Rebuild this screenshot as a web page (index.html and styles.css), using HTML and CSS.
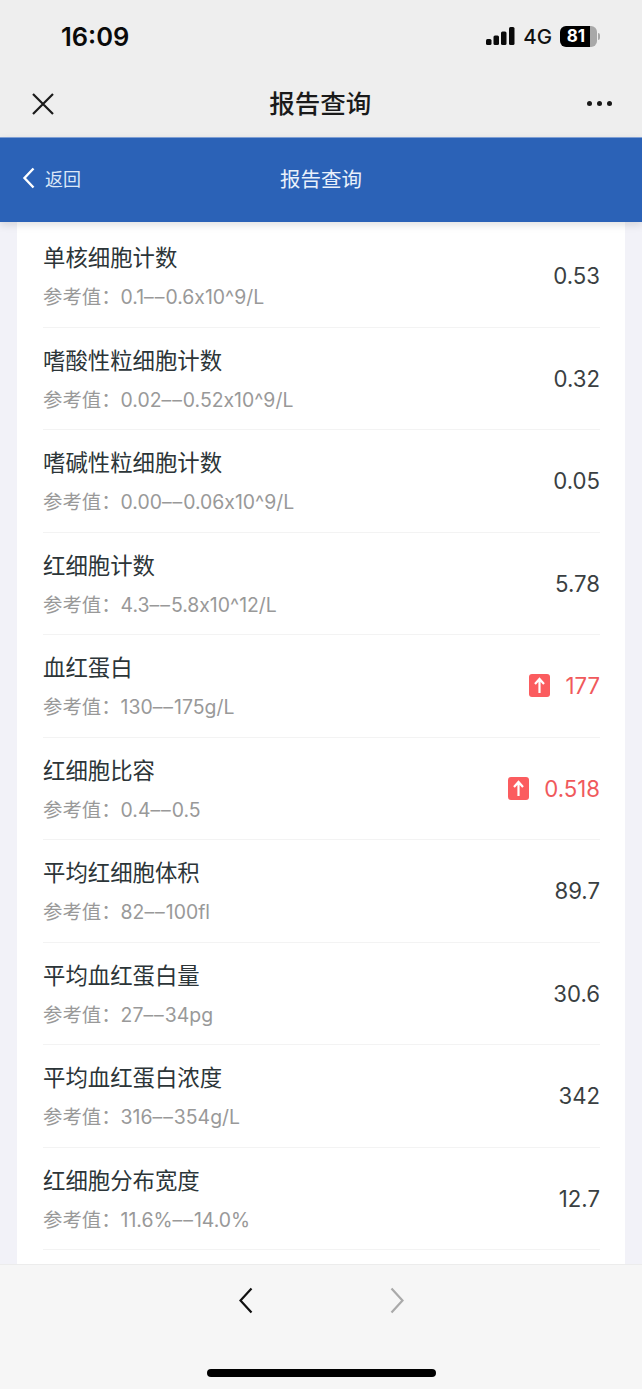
FILE: index.html
```html
<!DOCTYPE html>
<html lang="zh-CN">
<head>
    <meta charset="UTF-8">
    <meta name="viewport" content="width=device-width, initial-scale=1.0">
    <title>报告查询</title>
    <link rel="stylesheet" href="styles.css">
</head>
<body>
<div class="screen">
    <div class="status-bar">
        <span class="clock">16:09</span>
        <div class="status-right">
            <svg class="signal" width="29" height="18" viewBox="0 0 29 18">
                <rect x="0" y="12" width="5.5" height="6" rx="1.5"/>
                <rect x="7.5" y="8.5" width="5.5" height="9.5" rx="1.5"/>
                <rect x="15" y="4.5" width="5.5" height="13.500" rx="1.5"/>
                <rect x="23" y="0" width="5.5" height="18" rx="1.5"/>
            </svg>
            <span class="net">4G</span>
            <div class="battery">
                <div class="battery-level"><span class="battery-num">81</span></div>
                <div class="battery-rest"></div>
            </div>
            <div class="battery-cap"></div>
        </div>
    </div>

    <div class="nav-bar">
        <svg class="nav-close" width="22" height="22" viewBox="0 0 22 22">
            <path d="M1 1 L21 21 M21 1 L1 21" stroke="#1a1a1a" stroke-width="2.2" fill="none"/>
        </svg>
        <span class="nav-title">报告查询</span>
        <div class="nav-more"><i></i><i></i><i></i></div>
    </div>

    <div class="page-head">
        <div class="back">
            <svg width="14" height="22" viewBox="0 0 14 22">
                <path d="M11.500 1.500 L2.500 11 L11.500 20.500" stroke="#fff" stroke-width="2.400" fill="none"/>
            </svg>
            <span>返回</span>
        </div>
        <span class="page-title">报告查询</span>
    </div>

    <div class="content">
        <div class="card">
            <div class="row">
                <div class="info"><div class="name">单核细胞计数</div><div class="ref">参考值：0.1<span class="dash">––</span>0.6x10^9/L</div></div>
                <div class="value">0.53</div>
            </div>
            <div class="row">
                <div class="info"><div class="name">嗜酸性粒细胞计数</div><div class="ref">参考值：0.02<span class="dash">––</span>0.52x10^9/L</div></div>
                <div class="value">0.32</div>
            </div>
            <div class="row">
                <div class="info"><div class="name">嗜碱性粒细胞计数</div><div class="ref">参考值：0.00<span class="dash">––</span>0.06x10^9/L</div></div>
                <div class="value">0.05</div>
            </div>
            <div class="row">
                <div class="info"><div class="name">红细胞计数</div><div class="ref">参考值：4.3<span class="dash">––</span>5.8x10^12/L</div></div>
                <div class="value">5.78</div>
            </div>
            <div class="row">
                <div class="info"><div class="name">血红蛋白</div><div class="ref">参考值：130<span class="dash">––</span>175g/L</div></div>
                <div class="value high">
                    <svg class="up" width="21" height="23" viewBox="0 0 21 23">
                        <rect width="21" height="23" rx="3" fill="#fb5c5f"/>
                        <path d="M10.500 19 V6 M6 10 L10.500 5 L15 10" stroke="#fff" stroke-width="2.200" fill="none"/>
                    </svg>
                    177
                </div>
            </div>
            <div class="row">
                <div class="info"><div class="name">红细胞比容</div><div class="ref">参考值：0.4<span class="dash">––</span>0.5</div></div>
                <div class="value high">
                    <svg class="up" width="21" height="23" viewBox="0 0 21 23">
                        <rect width="21" height="23" rx="3" fill="#fb5c5f"/>
                        <path d="M10.500 19 V6 M6 10 L10.500 5 L15 10" stroke="#fff" stroke-width="2.200" fill="none"/>
                    </svg>
                    0.518
                </div>
            </div>
            <div class="row">
                <div class="info"><div class="name">平均红细胞体积</div><div class="ref">参考值：82<span class="dash">––</span>100fl</div></div>
                <div class="value">89.7</div>
            </div>
            <div class="row">
                <div class="info"><div class="name">平均血红蛋白量</div><div class="ref">参考值：27<span class="dash">––</span>34pg</div></div>
                <div class="value">30.6</div>
            </div>
            <div class="row">
                <div class="info"><div class="name">平均血红蛋白浓度</div><div class="ref">参考值：316<span class="dash">––</span>354g/L</div></div>
                <div class="value">342</div>
            </div>
            <div class="row">
                <div class="info"><div class="name">红细胞分布宽度</div><div class="ref">参考值：11.6%<span class="dash">––</span>14.0%</div></div>
                <div class="value">12.7</div>
            </div>
        </div>
    </div>

    <div class="bottom-bar">
        <div class="arrows">
            <svg width="16" height="27" viewBox="0 0 16 27">
                <path d="M13.500 1.500 L2.500 13.500 L13.500 25.500" stroke="#111" stroke-width="2.200" fill="none"/>
            </svg>
            <svg width="16" height="27" viewBox="0 0 16 27">
                <path d="M2.500 1.500 L13.500 13.500 L2.500 25.500" stroke="#aaa" stroke-width="2.200" fill="none"/>
            </svg>
        </div>
        <div class="home-bar"></div>
    </div>
</div>
</body>
</html>
```

FILE: styles.css
```css
* {
    box-sizing: border-box;
}

html, body {
    margin: 0;
    padding: 0;
}

body {
    font-family: Inter, "Noto Sans CJK SC", sans-serif;
    background: #f2f2f8;
}

.screen {
    display: flex;
    flex-direction: column;
    height: 1389px;
    overflow: hidden;
}

/* system status bar */
.status-bar {
    display: flex;
    align-items: center;
    justify-content: space-between;
    height: 70px;
    padding: 2px 42px 0 61px;
    background: #eeeeee;
    flex-shrink: 0;
}

.clock {
    font-size: 25.500px;
    font-weight: 600;
    color: #0a0a0a;
}

.status-right {
    display: flex;
    align-items: center;
}

.signal {
    fill: #0a0a0a;
    margin-right: 8px;
}

.net {
    font-size: 20.500px;
    font-weight: 500;
    color: #111;
    margin-right: 8px;
}

.battery {
    display: flex;
    width: 37px;
    height: 21px;
    border-radius: 6px;
    overflow: hidden;
}

.battery-level {
    width: 30px;
    background: #000;
    text-align: center;
}

.battery-num {
    display: block;
    color: #fff;
    font-size: 17px;
    font-weight: 700;
    line-height: 21px;
    padding-left: 2px;
}

.battery-rest {
    flex: 1;
    background: #a8a8a8;
}

.battery-cap {
    width: 2px;
    height: 7px;
    margin-left: 1px;
    background: #a8a8a8;
    border-radius: 0 2px 2px 0;
}

/* webview nav */
.nav-bar {
    display: flex;
    align-items: center;
    justify-content: space-between;
    height: 67px;
    padding: 0 30px 0 32px;
    background: #eeeeee;
    flex-shrink: 0;
}

.nav-title {
    flex: 1;
    text-align: center;
    font-size: 25.500px;
    font-weight: 500;
    color: #1a1a1a;
    padding-bottom: 4px;
}

.nav-more {
    display: flex;
    gap: 4.500px;
}

.nav-more i {
    display: block;
    width: 5.500px;
    height: 5.500px;
    border-radius: 50%;
    background: #1a1a1a;
}

/* blue page header */
.page-head {
    position: relative;
    z-index: 2;
    display: flex;
    align-items: center;
    justify-content: center;
    height: 85px;
    padding-bottom: 4px;
    background: #2b62b7;
    border-top: 1px solid #7f9fd4;
    box-shadow: 0 3px 8px rgba(0, 0, 0, 0.12);
    flex-shrink: 0;
}

.page-title {
    font-size: 20.500px;
    color: #e8f0fb;
}

.back {
    position: absolute;
    left: 22px;
    top: 0;
    bottom: 4px;
    display: flex;
    align-items: center;
    gap: 9px;
    font-size: 18px;
    color: #dce8f8;
}

/* list */
.content {
    flex: 1;
    min-height: 0;
    overflow: hidden;
    padding: 0 17px;
}

.card {
    background: #fff;
    min-height: 100%;
    padding: 3px 25px 0 26px;
}

.row {
    display: flex;
    align-items: center;
    justify-content: space-between;
    height: 102.500px;
    border-bottom: 1px solid #f3f3f3;
}

.info {
    padding-top: 2px;
}

.name {
    font-size: 22.400px;
    line-height: 30px;
    color: #2c3538;
}

.ref {
    font-size: 19.400px;
    line-height: 26px;
    margin-top: 11px;
    color: #999;
}

.dash {
    letter-spacing: 1px;
}

.value {
    display: flex;
    align-items: center;
    font-size: 22.200px;
    color: #3a3f42;
}

.value.high {
    color: #f0595c;
}

.up {
    margin-right: 15px;
}

/* bottom toolbar */
.bottom-bar {
    display: flex;
    flex-direction: column;
    align-items: center;
    height: 125px;
    background: #f6f6f6;
    border-top: 1px solid #ececec;
    flex-shrink: 0;
}

.arrows {
    display: flex;
    gap: 135px;
    margin-top: 22px;
}

.home-bar {
    width: 229px;
    height: 8px;
    margin-top: 55px;
    border-radius: 4px;
    background: #000;
}
```
